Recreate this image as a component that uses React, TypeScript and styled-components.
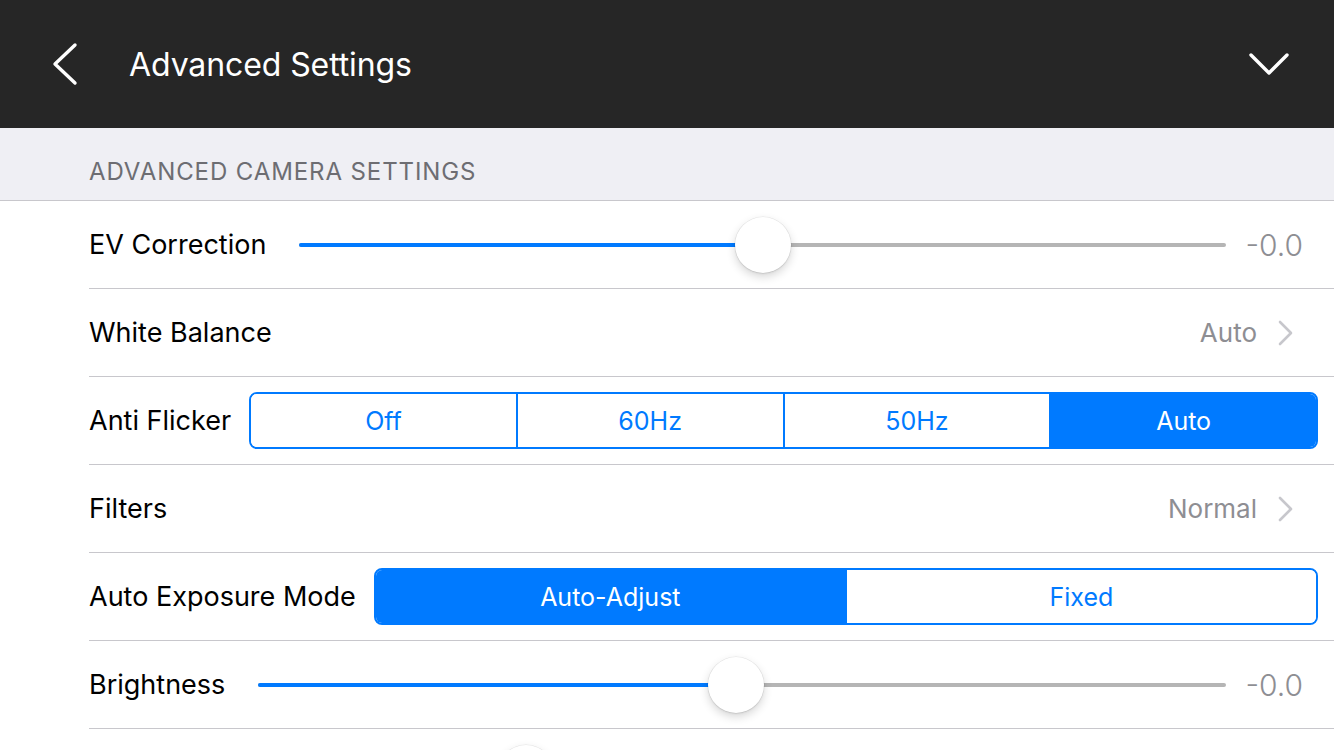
import styled, { createGlobalStyle } from "styled-components";

const GlobalStyle = createGlobalStyle`
  html, body {
    margin: 0;
    padding: 0;
    height: 750px;
    overflow: hidden;
    background: #fff;
    font-family: Inter, "Noto Sans", sans-serif;
    -webkit-font-smoothing: antialiased;
  }
`;

const Page = styled.div`
  width: 1334px;
  height: 750px;
  overflow: hidden;
  background: #fff;
`;

const NavBar = styled.header`
  height: 128px;
  background: #262626;
  display: flex;
  align-items: center;
  padding: 0 42px 0 52px;
`;

const NavTitle = styled.h1`
  flex: 1;
  margin: 0 0 0 49px;
  color: #fff;
  font-size: 32px;
  font-weight: 400;
  letter-spacing: -0.1px;
`;

const IconButton = styled.button`
  background: none;
  border: 0;
  padding: 0;
  display: flex;
  cursor: pointer;
`;

const SectionHeader = styled.div`
  height: 73px;
  background: #efeff4;
  border-bottom: 1px solid #c8c7cc;
  box-sizing: border-box;
  display: flex;
  align-items: flex-end;
  padding: 0 0 14px 89px;
  color: #6d6d72;
  font-size: 24px;
  letter-spacing: 0.9px;
  text-transform: uppercase;
`;

const List = styled.div`
  display: flex;
  flex-direction: column;
`;

const Row = styled.div<{ $tight?: boolean }>`
  height: 88px;
  box-sizing: border-box;
  margin-left: 89px;
  padding-right: ${({ $tight }) => ($tight ? "16px" : "31px")};
  border-bottom: 1px solid #c8c7cc;
  display: flex;
  align-items: center;
  flex-shrink: 0;
`;

const Label = styled.span`
  color: #000;
  font-size: 27px;
  line-height: 1;
  white-space: nowrap;
`;

const Detail = styled.span`
  margin-left: auto;
  display: flex;
  align-items: center;
  gap: 21px;
  color: #8e8e93;
  font-size: 26px;
  line-height: 1;
  padding-right: 9px;
`;

const SliderTrack = styled.div`
  position: relative;
  flex: 1;
  height: 4px;
  margin-left: 33px;
  border-radius: 2px;
  background: #b5b5b5;
`;

const SliderFill = styled.div`
  height: 100%;
  border-radius: 2px;
  background: #007aff;
`;

const SliderThumb = styled.div`
  position: absolute;
  top: 50%;
  width: 56px;
  height: 56px;
  margin: -28px 0 0 -28px;
  border-radius: 50%;
  background: #fff;
  box-shadow: 0 4px 10px rgba(0, 0, 0, 0.16), 0 1px 2px rgba(0, 0, 0, 0.08),
    0 0 0 0.5px rgba(0, 0, 0, 0.08);
`;

const SliderValue = styled.span`
  margin-left: 19px;
  min-width: 57px;
  text-align: right;
  color: #8e8e93;
  font-size: 30px;
  font-weight: 300;
  line-height: 1;
`;

const Segmented = styled.div`
  flex: 1;
  margin-left: 18px;
  height: 57px;
  box-sizing: border-box;
  display: flex;
  border: 2px solid #007aff;
  border-radius: 8px;
  overflow: hidden;
`;

const Segment = styled.div<{ $selected?: boolean }>`
  flex: 1;
  display: flex;
  align-items: center;
  justify-content: center;
  font-size: 25px;
  color: ${({ $selected }) => ($selected ? "#fff" : "#007aff")};
  background: ${({ $selected }) => ($selected ? "#007aff" : "#fff")};
  & + & {
    border-left: 2px solid #007aff;
  }
`;

const BackIcon = () => (
  <svg width="28" height="44" viewBox="0 0 28 44">
    <path d="M23 3 L3 22 L23 41" fill="none" stroke="#fff" strokeWidth="3.4" strokeLinecap="round" strokeLinejoin="round" />
  </svg>
);

const DownIcon = () => (
  <svg width="44" height="26" viewBox="0 0 44 26">
    <path d="M3 4 L21 22 L39 4" fill="none" stroke="#fff" strokeWidth="3.4" strokeLinecap="round" strokeLinejoin="round" />
  </svg>
);

const Disclosure = () => (
  <svg width="16" height="26" viewBox="0 0 16 26">
    <path d="M2 2 L13 13 L2 24" fill="none" stroke="#c7c7cc" strokeWidth="2.6" strokeLinecap="round" strokeLinejoin="round" />
  </svg>
);

const SliderRow = ({ label, value, ratio }: { label?: string; value?: string; ratio: number }) => (
  <Row>
    {label && <Label>{label}</Label>}
    <SliderTrack>
      <SliderFill style={{ width: `${ratio * 100}%` }} />
      <SliderThumb style={{ left: `${ratio * 100}%` }} />
    </SliderTrack>
    <SliderValue>{value}</SliderValue>
  </Row>
);

const DetailRow = ({ label, value }: { label: string; value: string }) => (
  <Row>
    <Label>{label}</Label>
    <Detail>
      {value}
      <Disclosure />
    </Detail>
  </Row>
);

const SegmentRow = ({ label, options, selected }: { label: string; options: string[]; selected: number }) => (
  <Row $tight>
    <Label>{label}</Label>
    <Segmented>
      {options.map((o, i) => (
        <Segment key={o} $selected={i === selected}>
          {o}
        </Segment>
      ))}
    </Segmented>
  </Row>
);

export default function App() {
  return (
    <Page>
      <GlobalStyle />
      <NavBar>
        <IconButton aria-label="Back">
          <BackIcon />
        </IconButton>
        <NavTitle>Advanced Settings</NavTitle>
        <IconButton aria-label="Collapse">
          <DownIcon />
        </IconButton>
      </NavBar>
      <SectionHeader>Advanced Camera Settings</SectionHeader>
      <List>
        <SliderRow label="EV Correction" value="-0.0" ratio={0.5} />
        <DetailRow label="White Balance" value="Auto" />
        <SegmentRow label="Anti Flicker" options={["Off", "60Hz", "50Hz", "Auto"]} selected={3} />
        <DetailRow label="Filters" value="Normal" />
        <SegmentRow label="Auto Exposure Mode" options={["Auto-Adjust", "Fixed"]} selected={0} />
        <SliderRow label="Brightness" value="-0.0" ratio={0.493} />
        {/* next row is scrolled mostly out of view; only its thumb peeks in */}
        <SliderRow ratio={0.366} />
      </List>
    </Page>
  );
}
